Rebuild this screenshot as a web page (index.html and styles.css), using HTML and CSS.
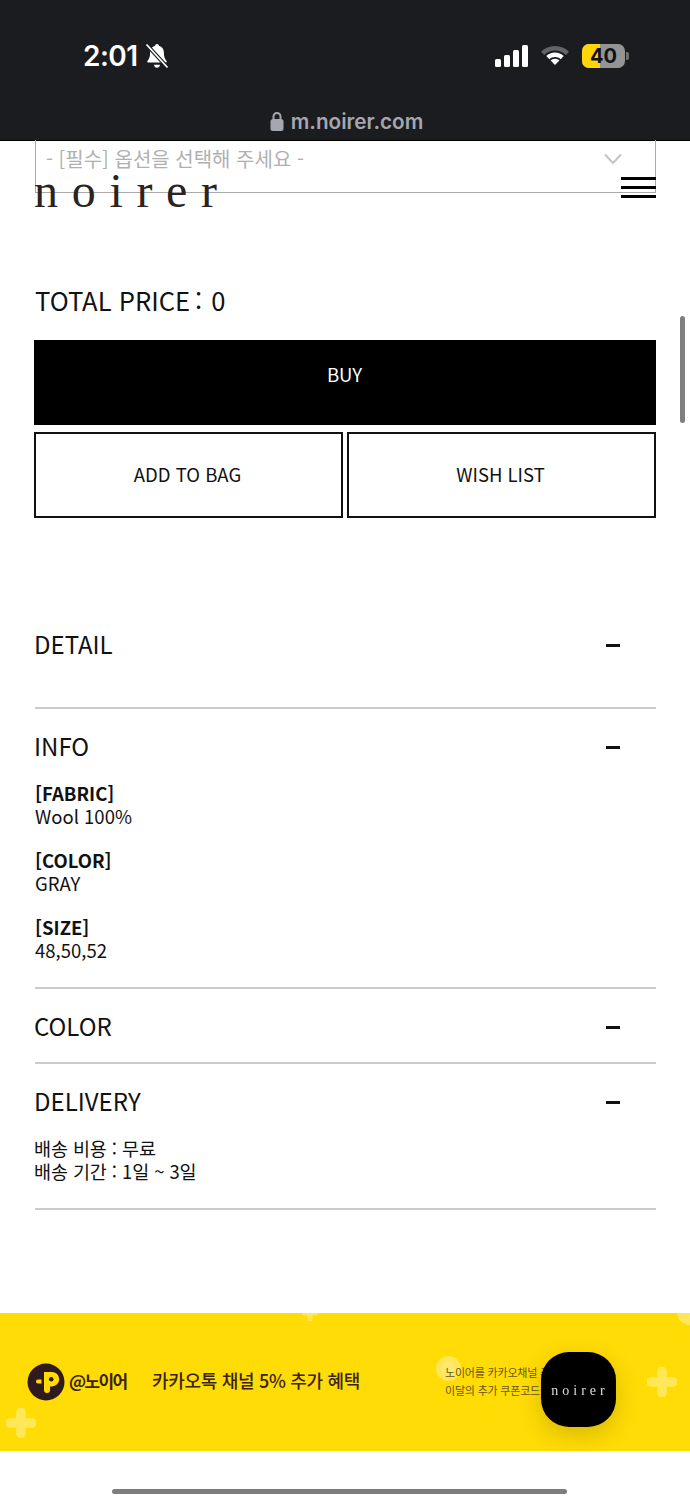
FILE: index.html
```html
<!DOCTYPE html>
<html lang="ko">
<head>
<meta charset="utf-8">
<title>noirer</title>
<link rel="stylesheet" href="styles.css">
</head>
<body>
<div class="screen">
  <header class="chrome">
    <div class="status">
      <div class="status-left">
        <span class="time">2:01</span>
        <svg class="bell" viewBox="0 0 24 26" width="24" height="26"><path d="M12 1c1.100 0 1.800.8 1.900 1.800 3.300.9 5 3.600 5 7 0 4 .9 6.200 2.500 7.900.7.800.2 1.800-.8 1.800H3.400c-1 0-1.500-1-.8-1.800C4.200 16 5.100 13.800 5.100 9.800c0-3.400 1.700-6.100 5-7C10.200 1.800 10.900 1 12 1zM9 21.700h6c-.2 1.800-1.400 3.100-3 3.100s-2.800-1.300-3-3.100z" fill="#fff"/><path d="M1.500 1.500l21 23" stroke="#1a1c1f" stroke-width="4"/><path d="M1.500 1.500l21 23" stroke="#fff" stroke-width="1.800"/></svg>
      </div>
      <div class="status-right">
        <svg class="signal" viewBox="0 0 34 22" width="34" height="22"><rect x="0" y="14" width="6" height="8" rx="1.500"/><rect x="9" y="10" width="6" height="12" rx="1.500"/><rect x="18" y="5" width="6" height="17" rx="1.500"/><rect x="27" y="0" width="6" height="22" rx="1.500"/></svg>
        <svg class="wifi" viewBox="0 0 30 22" width="30" height="22"><path d="M15 1C9.500 1 4.500 3.200 1 6.800l3.200 3.300C7 7.300 10.800 5.600 15 5.600s8 1.700 10.800 4.500L29 6.800C25.500 3.200 20.500 1 15 1z" fill="#636467"/><path d="M15 7.500c-3.400 0-6.500 1.400-8.700 3.600l3 3.100c1.500-1.400 3.500-2.300 5.700-2.300s4.200.9 5.700 2.300l3-3.100C21.500 8.900 18.400 7.500 15 7.500zM15 13.700c-1.700 0-3.300.7-4.400 1.800L15 20l4.400-4.500c-1.100-1.100-2.700-1.800-4.400-1.800z" fill="#fff"/></svg>
        <div class="battery"><div class="battery-fill"></div><span class="battery-num">40</span></div>
        <span class="battery-cap"></span>
      </div>
    </div>
    <div class="url">
      <svg class="lock" viewBox="0 0 14 20" width="14" height="20"><path d="M3.500 9V5.500a3.500 3.500 0 0 1 7 0V9" fill="none" stroke="#a5a7b0" stroke-width="2"/><rect x="0.500" y="8" width="13" height="12" rx="2.500" fill="#a5a7b0"/></svg>
      <span>m.noirer.com</span>
    </div>
  </header>

  <main class="page">
    <div class="select">
      <span>- [필수] 옵션을 선택해 주세요 -</span>
      <svg class="chev" viewBox="0 0 18 12" width="18" height="12"><path d="M1 1.500l8 8.500 8-8.500" fill="none" stroke="#c4c4c4" stroke-width="2"/></svg>
    </div>

    <p class="total">TOTAL PRICE<span class="colon">:</span>0</p>

    <div class="btn btn-buy">BUY</div>
    <div class="btn-row">
      <div class="btn btn-line">ADD TO BAG</div>
      <div class="btn btn-line">WISH LIST</div>
    </div>

    <section class="acc acc-detail">
      <div class="acc-head"><span class="acc-title">DETAIL</span><i class="minus"></i></div>
    </section>
    <section class="acc acc-info">
      <div class="acc-head"><span class="acc-title">INFO</span><i class="minus"></i></div>
      <div class="acc-body">
        <p><b>[FABRIC]</b><br>Wool 100%</p>
        <p><b>[COLOR]</b><br>GRAY</p>
        <p><b>[SIZE]</b><br>48,50,52</p>
      </div>
    </section>
    <section class="acc acc-color">
      <div class="acc-head"><span class="acc-title">COLOR</span><i class="minus"></i></div>
    </section>
    <section class="acc acc-delivery">
      <div class="acc-head"><span class="acc-title">DELIVERY</span><i class="minus"></i></div>
      <div class="acc-body acc-body-ko">
        <p>배송 비용 : 무료<br>배송 기간 : 1일 ~ 3일</p>
      </div>
    </section>
  </main>

  <aside class="banner">
    <svg class="deco deco-1" viewBox="0 0 28 28"><path d="M14 4v20M4 14h20"/></svg>
    <svg class="deco deco-2" viewBox="0 0 28 28"><path d="M14 4v20M4 14h20"/></svg>
    <svg class="deco deco-3" viewBox="0 0 28 28"><path d="M14 4v20M4 14h20"/></svg>
    <span class="deco-ring"></span>
    <span class="deco-corner"></span>
    <svg class="kakao" viewBox="0 0 38 38" width="38" height="38"><circle cx="19" cy="19" r="18.500" fill="#301a1f"/><path d="M17 9h8a7.200 7.200 0 0 1 0 14.400h-2v3.600a3 3 0 0 1-6 0z" fill="#ffdd00"/><circle cx="24.200" cy="16.200" r="2.300" fill="#301a1f"/><rect x="9" y="16.500" width="9" height="4" rx="2" fill="#ffdd00"/><rect x="14.500" y="15.500" width="2.500" height="6" fill="#301a1f"/></svg>
    <span class="handle">@노이어</span>
    <span class="promo">카카오톡 채널 5% 추가 혜택</span>
    <span class="note">노이어를 카카오채널 추가하면<br>이달의 추가 쿠폰코드를 드립니다.</span>
  </aside>

  <div class="home-zone"><span class="home-bar"></span></div>

  <div class="site-head">
    <span class="logo">noirer</span>
    <span class="burger"><i></i><i></i><i></i></span>
  </div>
  <span class="scroll"></span>
  <div class="fab">noirer</div>
</div>
</body>
</html>
```

FILE: styles.css
```css
* { box-sizing: border-box; }
html, body { margin: 0; padding: 0; background: #fff; }
body { font-family: "Noto Sans CJK KR", "Noto Sans", sans-serif; color: #111; }
p { margin: 0; }

.screen { position: relative; width: 690px; height: 1500px; overflow: hidden; background: #fff; }

.chrome { height: 141px; background: #1a1c1f; border-bottom: 1px solid #000; display: flex; flex-direction: column; }
.status { height: 106px; padding: 39px 61px 0 83px; display: flex; justify-content: space-between; align-items: flex-start; }
.status-left { display: flex; align-items: center; height: 34px; }
.time { font-family: Inter, "Liberation Sans", sans-serif; font-weight: 600; font-size: 28px; line-height: 34px; color: #fff; letter-spacing: -0.5px; }
.bell { margin-left: 7px; }
.status-right { display: flex; align-items: center; height: 34px; }
.signal { fill: #fff; }
.wifi { margin-left: 11px; }
.battery { position: relative; width: 43px; height: 24px; margin-left: 12px; border-radius: 7px; overflow: hidden; background: #949494; }
.battery-fill { position: absolute; left: 0; top: 0; bottom: 0; width: 18px; background: #ffd60a; }
.battery-num { position: relative; display: block; text-align: center; font-family: Inter, "Liberation Sans", sans-serif; font-weight: 700; font-size: 20px; line-height: 24px; color: #111; }
.battery-cap { width: 3px; height: 8px; margin-left: 1px; background: #6f6f6f; border-radius: 0 2px 2px 0; }

.url { display: flex; justify-content: center; align-items: center; gap: 7px; height: 30px; padding-left: 3px; color: #a5a7b0; font-family: Inter, "Liberation Sans", sans-serif; font-weight: 600; font-size: 20.700px; }

.page { padding: 0 34px; }

.select { height: 53px; margin: -1px 0 0 1px; border: 1px solid #aaa; border-top: 0; display: flex; justify-content: space-between; align-items: center; padding: 0 33px 15px 10px; color: #b0b0b0; font-size: 20px; }

.total { margin-top: 87px; height: 40px; font-size: 25.600px; line-height: 40px; color: #111; padding-left: 1px; }
.colon { margin: 0 9px 0 5px; }

.btn { display: flex; align-items: center; justify-content: center; font-size: 18.500px; }
.btn-buy { margin-top: 20px; height: 85px; background: #000; color: #fff; padding-bottom: 18px; padding-right: 1px; }
.btn-row { display: flex; gap: 4px; margin-top: 7px; }
.btn-line { flex: 1; height: 86px; background: #fff; color: #111; border: 2px solid #111; padding: 0 2px 2px 0; }

.acc { border-bottom: 2px solid #ccc; margin-left: 1px; }
.acc-head { display: flex; justify-content: space-between; align-items: center; height: 36px; font-size: 24px; line-height: 36px; padding-right: 36px; }
.acc-title { padding-bottom: 3px; margin-left: -1px; }
.acc-detail { margin-top: 109px; padding-bottom: 44px; }
.acc-info { padding-top: 20px; padding-bottom: 25px; }
.acc-color { padding-top: 20px; padding-bottom: 17px; }
.acc-delivery { padding-top: 20px; padding-bottom: 25px; }
.minus { display: block; width: 14px; height: 3px; background: #111; }
.acc-body { margin-top: 17px; font-size: 18.500px; line-height: 23px; }
.acc-body-ko { letter-spacing: -0.1px; margin-left: -1px; }
.acc-body p + p { margin-top: 21px; }
.acc-body b { font-weight: 700; }

.banner { position: absolute; left: 0; right: 0; top: 1313px; height: 138px; background: #ffdc05; overflow: hidden; }
.kakao { position: absolute; left: 27px; top: 50px; }
.handle { position: absolute; left: 69px; top: 54px; font-size: 17px; line-height: 27px; font-weight: 700; color: #3a2410; letter-spacing: -1.600px; }
.promo { position: absolute; left: 152px; top: 54px; font-size: 18px; line-height: 27px; font-weight: 500; color: #3a2410; letter-spacing: -0.300px; }
.note { position: absolute; left: 445px; top: 50px; font-size: 11px; line-height: 18px; color: #6b5510; letter-spacing: -0.2px; white-space: nowrap; }
.deco { position: absolute; width: 30px; height: 30px; fill: none; stroke: #ffe857; stroke-width: 9; stroke-linecap: round; }
.deco-1 { left: 6px; top: 95px; }
.deco-2 { left: 647px; top: 54px; }
.deco-3 { left: 302px; top: -8px; width: 16px; height: 16px; }
.deco-ring { position: absolute; left: 436px; top: 43px; width: 25px; height: 25px; border-radius: 50%; background: #ffea6b; border: 5px solid #ffe657; }
.deco-corner { position: absolute; left: 677px; top: -14px; width: 26px; height: 26px; border-radius: 50%; background: #ffe857; }

.home-zone { position: absolute; left: 0; right: 0; top: 1451px; height: 49px; background: #fff; }
.home-bar { position: absolute; left: 112px; top: 38px; width: 455px; height: 5px; border-radius: 3px; background: #7d7d7d; }

.site-head { position: absolute; left: 34px; right: 34px; top: 163px; display: flex; justify-content: space-between; align-items: flex-start; }
.logo { font-family: "Liberation Serif", serif; font-size: 48px; line-height: 56px; letter-spacing: 13.700px; color: #2a2320; font-weight: 400; }
.burger { display: flex; flex-direction: column; gap: 6px; margin-top: 14px; }
.burger i { display: block; width: 35px; height: 3px; background: #000; }

.scroll { position: absolute; left: 680px; top: 316px; width: 5px; height: 107px; border-radius: 3px; background: #7f7f7f; }

.fab { position: absolute; left: 541px; top: 1352px; width: 75px; height: 75px; border-radius: 28px; background: #000; color: #ddd; display: flex; align-items: center; justify-content: center; font-family: "Liberation Serif", serif; font-size: 14px; letter-spacing: 4px; padding: 2px 0 0 3px; box-shadow: 0 8px 24px rgba(0,0,0,0.16); will-change: opacity; }
```
